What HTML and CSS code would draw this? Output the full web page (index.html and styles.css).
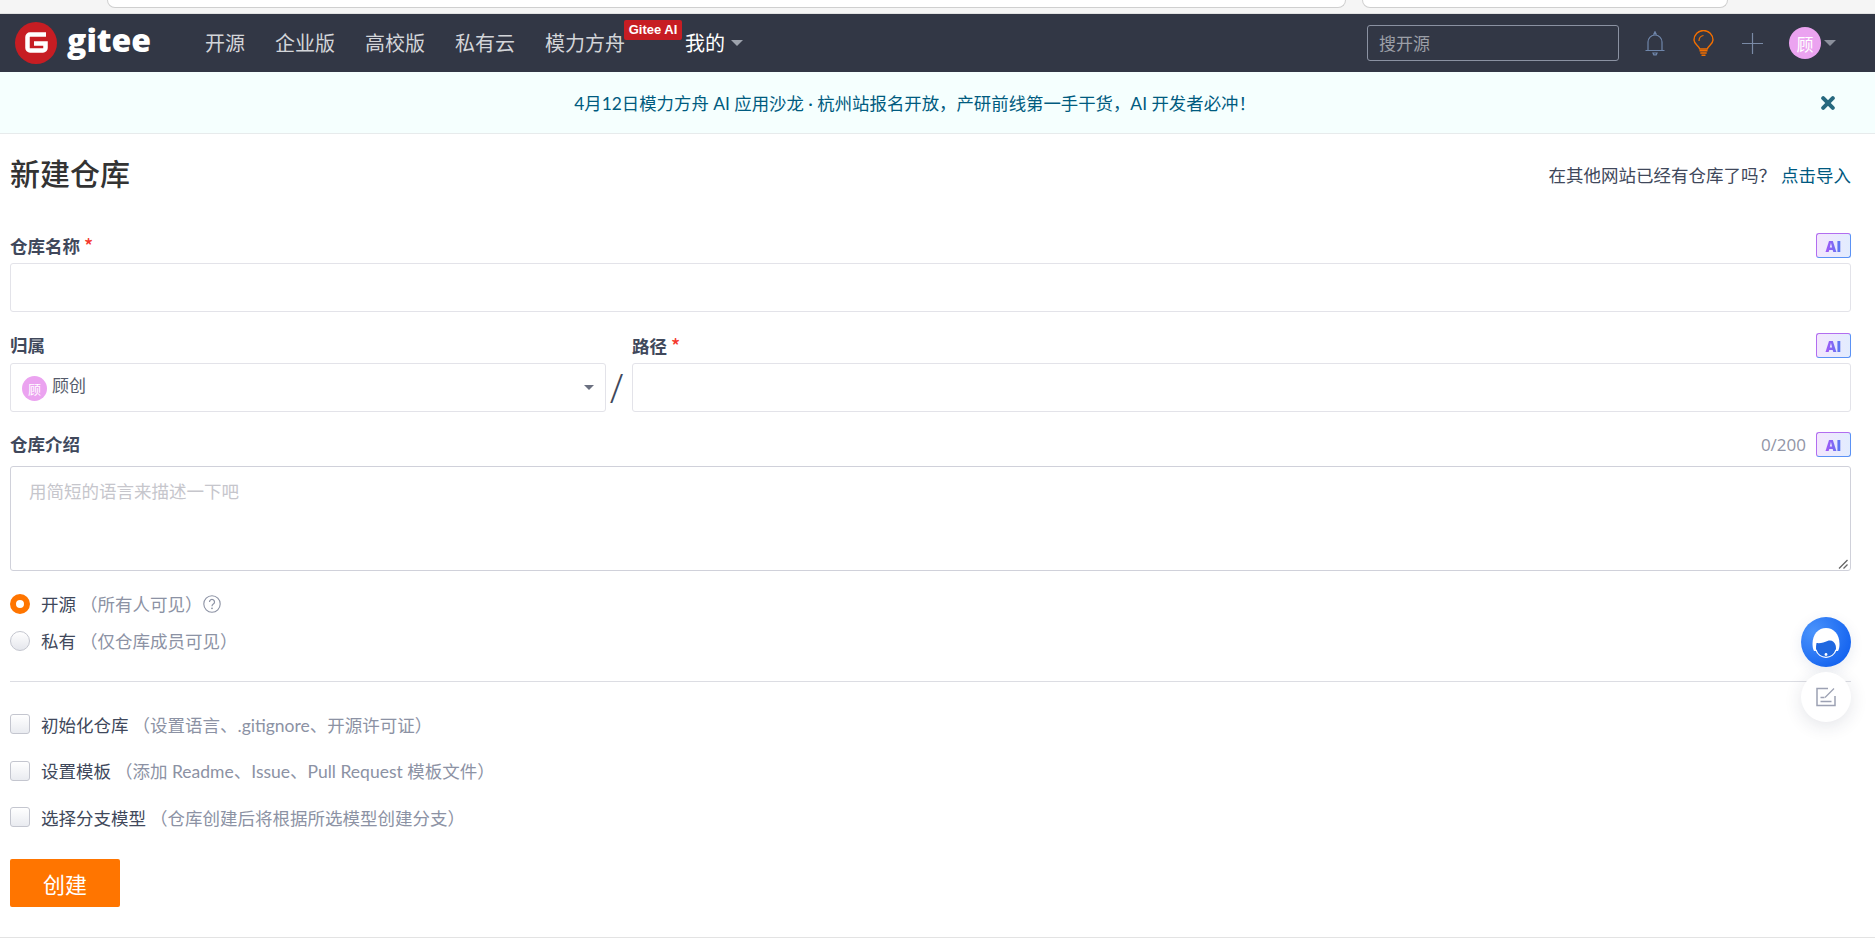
FILE: index.html
```html
<!DOCTYPE html>
<html lang="zh-CN">
<head>
<meta charset="utf-8">
<title>新建仓库 - Gitee</title>
<link rel="stylesheet" href="styles.css">
</head>
<body>
<div class="page">
  <div class="chrome">
    <div class="pill pill-a"></div>
    <div class="pill pill-b"></div>
  </div>

  <header class="nav">
    <a class="brand">
      <svg class="logo" viewBox="0 0 42 42" width="42" height="42">
        <circle cx="21" cy="21" r="21" fill="#c71d23"/>
        <path d="M31 12.500H15a2.500 2.500 0 0 0-2.500 2.500v11a2.500 2.500 0 0 0 2.500 2.500h13a2.500 2.500 0 0 0 2.500-2.500v-4.500H19" fill="none" stroke="#fff" stroke-width="4.500"/>
      </svg>
      <span class="brand-name">gitee</span>
    </a>
    <nav class="menu">
      <a class="menu-item">开源</a>
      <a class="menu-item">企业版</a>
      <a class="menu-item">高校版</a>
      <a class="menu-item">私有云</a>
      <a class="menu-item menu-ai">模力方舟<span class="ai-tag">Gitee AI</span></a>
      <a class="menu-item menu-mine">我的<i class="caret caret-nav"></i></a>
    </nav>
    <div class="nav-right">
      <div class="search">搜开源</div>
      <svg class="ico-bell" viewBox="0 0 20 25" width="20" height="25">
        <path d="M3 19V11a7 7 0 0 1 14 0v8M0.500 19.500h19M8.500 3.800 10 0.800l1.500 3M8 22h4l-.8 1.800H8.800z" fill="none" stroke="#6f86ab" stroke-width="1.200"/>
      </svg>
      <svg class="ico-bulb" viewBox="0 0 21 26" width="21" height="26">
        <path d="M6.800 19C5.800 15.500 1 14 1 10a9.500 9.500 0 0 1 19 0c0 4-4.800 5.500-5.800 9z" fill="none" stroke="#f26f00" stroke-width="1.400"/>
        <path d="M6 11A5.500 5.500 0 0 1 10.500 5.500" fill="none" stroke="#f26f00" stroke-width="1.200"/>
        <path d="M6.500 20.800h8M7.300 23h6.400M8.500 25.200h4" stroke="#f26f00" stroke-width="1.400"/>
      </svg>
      <svg class="ico-plus" viewBox="0 0 21 21" width="21" height="21">
        <path d="M10.500 0v21M0 10.500h21" stroke="#7a8aa6" stroke-width="1.200"/>
      </svg>
      <span class="avatar avatar-nav">顾</span>
      <i class="caret caret-user"></i>
    </div>
  </header>

  <div class="banner">
    <span class="banner-text">4月12日模力方舟 AI 应用沙龙 · 杭州站报名开放，产研前线第一手干货，AI 开发者必冲！</span>
    <svg class="banner-close" viewBox="0 0 14 14" width="14" height="14">
      <path d="M2.200 2.200l9.600 9.600M11.800 2.200l-9.600 9.600" stroke="#27697f" stroke-width="4" stroke-linecap="round"/>
    </svg>
  </div>

  <main class="main">
    <div class="title-row">
      <h1 class="title">新建仓库</h1>
      <div class="import">在其他网站已经有仓库了吗？<a class="link">点击导入</a></div>
    </div>

    <section class="field field-name">
      <div class="label-row">
        <label class="label">仓库名称 <b class="req">*</b></label>
        <span class="ai-btn"><em class="ai-text">AI</em></span>
      </div>
      <div class="input"></div>
    </section>

    <section class="field-split">
      <div class="col-owner">
        <div class="label-row"><label class="label">归属</label></div>
        <div class="input select">
          <span class="avatar avatar-small">顾</span>
          <span class="select-text">顾创</span>
          <i class="caret caret-select"></i>
        </div>
      </div>
      <span class="slash">/</span>
      <div class="col-path">
        <div class="label-row">
          <label class="label">路径 <b class="req">*</b></label>
          <span class="ai-btn"><em class="ai-text">AI</em></span>
        </div>
        <div class="input"></div>
      </div>
    </section>

    <section class="field field-desc">
      <div class="label-row">
        <label class="label">仓库介绍</label>
        <span class="counter">0/200</span>
        <span class="ai-btn"><em class="ai-text">AI</em></span>
      </div>
      <div class="textarea">
        用简短的语言来描述一下吧
        <svg class="resize" viewBox="0 0 10 10" width="10" height="10">
          <path d="M1 9.500 9.500 1M5.500 9.500 9.500 5.500" stroke="#666" stroke-width="1.300"/>
        </svg>
      </div>
    </section>

    <section class="radios">
      <div class="opt">
        <i class="radio radio-on"></i><span class="opt-text">开源</span><span class="hint hint-radio">（所有人可见）</span>
        <svg class="help" viewBox="0 0 18 18" width="18" height="18">
          <circle cx="9" cy="9" r="8.200" fill="none" stroke="#8c92a4" stroke-width="1.100"/>
          <path d="M6.500 7a2.500 2.500 0 1 1 3.800 2.100C9.300 9.700 9 10.200 9 11.200" fill="none" stroke="#8c92a4" stroke-width="1.200"/>
          <circle cx="9" cy="13.300" r=".9" fill="#8c92a4"/>
        </svg>
      </div>
      <div class="opt">
        <i class="radio"></i><span class="opt-text">私有</span><span class="hint hint-radio">（仅仓库成员可见）</span>
      </div>
    </section>

    <hr class="divider">

    <section class="checks">
      <div class="opt"><i class="check"></i><span class="opt-text">初始化仓库</span><span class="hint">（设置语言、.gitignore、开源许可证）</span></div>
      <div class="opt"><i class="check"></i><span class="opt-text">设置模板</span><span class="hint">（添加 Readme、Issue、Pull Request 模板文件）</span></div>
      <div class="opt"><i class="check"></i><span class="opt-text">选择分支模型</span><span class="hint">（仓库创建后将根据所选模型创建分支）</span></div>
    </section>

    <button class="submit">创建</button>
  </main>

  <div class="float-btn float-chat">
    <svg viewBox="0 0 50 50" width="50" height="50">
      <path d="M11.500 27c0-10 6-16 13.500-16s13.500 6 13.500 16c0 3-.5 5-1.500 7H13c-1-2-1.500-4-1.500-7z" fill="#fff"/>
      <path d="M15.500 26c4 .5 8-.5 11-2 3.500-1.500 7 .5 8 4 .5 1.500.5 3 .5 4a10.200 10.200 0 0 1-20 0c0-2 0-4 .5-6z" fill="#2068e0"/>
      <path d="M15 33a10.500 10.500 0 0 0 20 0" fill="none" stroke="#fff" stroke-width="1.200"/>
      <circle cx="25" cy="37.500" r="1.400" fill="#fff"/>
    </svg>
  </div>
  <div class="float-btn float-edit">
    <svg viewBox="0 0 20 20" width="20" height="20">
      <path d="M12 1.500H1V18.500H19V9" fill="none" stroke="#9ca1b3" stroke-width="1.500"/>
      <path d="M9 10.500 18 1.500" stroke="#9ca1b3" stroke-width="1.300"/>
      <path d="M4.500 10.500h4M4.500 14.500h11" stroke="#9ca1b3" stroke-width="1.300"/>
    </svg>
  </div>
</div>
</body>
</html>
```
FILE: styles.css
```css
* { box-sizing: border-box; }
html, body { margin: 0; padding: 0; height: 100%; }
body {
  background: #fff;
  font-family: "Open Sans", "Noto Sans CJK SC", sans-serif;
  font-size: 17px;
  color: #40485b;
  overflow: hidden;
}
.page {
  position: relative;
  width: 1875px;
  height: 938px;
  overflow: hidden;
  border-bottom: 1px solid #e3e3e3;
}
.chrome {
  display: flex;
  height: 14px;
  padding-left: 107px;
  gap: 16px;
  background: #f5f5f5;
  border-bottom: 1px solid #e2e2e2;
}
.pill {
  height: 8px;
  background: #fff;
  border: 1px solid #cfcfcf;
  border-top: 0;
  border-radius: 0 0 14px 14px;
}
.pill-a { width: 1239px; }
.pill-b { width: 366px; }

.nav {
  display: flex;
  align-items: center;
  height: 58px;
  padding-left: 15px;
  background: #323745;
}
.brand { display: flex; align-items: center; gap: 10px; width: 190px; }
.logo { flex: none; }
.brand-name {
  font-family: "Open Sans", sans-serif;
  font-size: 32px;
  font-weight: 800;
  line-height: 1;
  color: #fff;
  position: relative;
  top: -3px;
}
.menu { display: flex; align-items: center; gap: 30px; }
.menu-item {
  position: relative;
  font-family: "Noto Sans CJK SC", sans-serif;
  font-size: 20px;
  line-height: 28px;
  color: #d3d5d9;
}
.menu-ai { margin-right: 30px; }
.menu-mine { color: #fff; display: flex; align-items: center; }
.ai-tag {
  position: absolute;
  left: 79px;
  top: -9px;
  width: 58px;
  height: 20px;
  border-radius: 2px;
  background: #c71d23;
  color: #fff;
  font-family: "Liberation Sans", sans-serif;
  font-size: 13px;
  font-weight: 700;
  line-height: 20px;
  text-align: center;
  white-space: nowrap;
}
.caret {
  display: inline-block;
  width: 0;
  height: 0;
  border-style: solid;
  border-color: #9ea3ad transparent transparent;
  border-width: 6px 6px 0;
}
.caret-nav { margin-left: 6px; }
.nav-right {
  display: flex;
  align-items: center;
  margin-left: auto;
  padding-right: 39px;
}
.search {
  width: 252px;
  height: 36px;
  margin-right: 26px;
  padding-left: 11px;
  border: 1px solid #8b92a2;
  border-radius: 3px;
  font-family: "Noto Sans CJK SC", sans-serif;
  font-size: 17px;
  line-height: 34px;
  color: #9c9fa7;
}
.ico-bell { margin-right: 28px; }
.ico-bulb { margin-right: 28px; }
.ico-plus { margin-right: 26px; }
.avatar {
  display: inline-flex;
  align-items: center;
  justify-content: center;
  border-radius: 50%;
  background: #eba3f0;
  color: #fff;
  font-family: "Noto Sans CJK SC", sans-serif;
  flex: none;
}
.avatar-nav { width: 32px; height: 32px; font-size: 17px; }
.caret-user { margin-left: 3px; margin-top: -1px; border-color: #8b909c transparent transparent; }

.banner {
  display: flex;
  align-items: center;
  justify-content: center;
  position: relative;
  height: 62px;
  background: #f5fffe;
  border-bottom: 1px solid #e7ebec;
  padding-right: 45px;
}
.banner-text {
  font-family: "Lato", "Noto Sans CJK SC", sans-serif;
  font-size: 17.400px;
  color: #005b7f;
  white-space: nowrap;
}
.banner-close { position: absolute; left: 1821px; top: 24px; }

.main { padding: 0 24px 0 10px; }
.title-row {
  display: flex;
  align-items: center;
  justify-content: space-between;
  height: 80px;
  margin-bottom: 19px;
}
.title {
  margin: 0 0 4px;
  font-family: "Noto Sans CJK SC", sans-serif;
  font-size: 30px;
  font-weight: 500;
  line-height: 40px;
  color: #333;
}
.import { font-family: "Noto Sans CJK SC", sans-serif; font-size: 17.500px; color: #40485b; white-space: nowrap; }
.link { color: #005980; margin-left: 5px; }

.label-row {
  display: flex;
  align-items: center;
  height: 25px;
  margin-bottom: 5px;
}
.label {
  font-family: "Noto Sans CJK SC", sans-serif;
  font-size: 17.500px;
  font-weight: 700;
  color: #40485b;
  margin-right: auto;
  padding-bottom: 2px;
}
.req { color: #f5392d; font-weight: 500; font-size: 19px; }
.ai-btn {
  width: 35px;
  height: 25px;
  flex: none;
  border-radius: 3px;
  border: 1px solid #a78bfa;
  border-color: #b26df0 #5b92f5 #5b92f5 #b26df0;
  background: linear-gradient(90deg, #f3e6fd, #e2ecfe);
  text-align: center;
  line-height: 23px;
}
.ai-text {
  font-family: "Open Sans", sans-serif;
  font-size: 15px;
  font-style: normal;
  font-weight: 800;
  background: linear-gradient(90deg, #a855f7, #4f7cf0);
  -webkit-background-clip: text;
  background-clip: text;
  color: transparent;
}
.input {
  height: 49px;
  border: 1px solid #e3e3e9;
  border-radius: 3px;
  background: #fff;
}
.field-name { margin-bottom: 21px; }
.field-split { display: flex; margin-bottom: 20px; }
.col-owner { width: 596px; flex: none; }
.col-path { flex: 1; }
.slash {
  width: 26px;
  flex: none;
  align-self: flex-end;
  font-family: "Open Sans", sans-serif;
  font-size: 40px;
  font-weight: 300;
  line-height: 49px;
  text-align: center;
  color: #40485b;
  padding-right: 5px;
}
.select {
  display: flex;
  align-items: center;
  position: relative;
  padding-left: 11px;
}
.avatar-small { width: 25px; height: 25px; font-size: 13px; margin-top: 1px; }
.select-text {
  margin-left: 5px;
  margin-top: -6px;
  font-family: "Noto Sans CJK SC", sans-serif;
  color: #555b6b;
}
.caret-select {
  margin-left: auto;
  margin-right: 11px;
  border-color: #6b7080 transparent transparent;
  border-width: 5px 5px 0;
}
.field-desc .label-row { margin-bottom: 9px; }
.counter { font-size: 17px; color: #9195a6; margin-right: 10px; }
.textarea {
  position: relative;
  height: 105px;
  padding: 12px 18px;
  border: 1px solid #d0d1da;
  border-radius: 3px;
  font-family: "Noto Sans CJK SC", sans-serif;
  font-size: 17.500px;
  color: #c6c6cc;
  line-height: 24px;
}
.resize { position: absolute; right: 2px; bottom: 1px; }

.radios { padding-top: 14px; }
.opt {
  display: flex;
  align-items: center;
  height: 37px;
  white-space: nowrap;
}
.opt-text { margin-left: 11px; font-family: "Noto Sans CJK SC", sans-serif; color: #40485b; font-size: 17.500px; }
.hint { color: #8c92a4; font-size: 17.500px; font-family: "Lato", "Noto Sans CJK SC", sans-serif; margin-left: 4px; }
.hint-radio { margin-left: 4px; }
.help { margin-left: 0; }
.radio {
  width: 20px;
  height: 20px;
  flex: none;
  border-radius: 50%;
  border: 1px solid #c4c6cf;
  background: linear-gradient(#fff, #e4e6ec);
}
.radio-on { border: 6px solid #ff7500; background: #fff; }
.divider {
  margin: 22px 0 19px;
  border: 0;
  border-top: 1px solid #dcdde3;
}
.checks .opt { height: 46.500px; }
.check {
  width: 20px;
  height: 20px;
  flex: none;
  border-radius: 3px;
  border: 1px solid #c4c6cf;
  background: linear-gradient(#fff, #e9ebf0);
}
.submit {
  display: block;
  width: 110px;
  height: 48px;
  margin-top: 18px;
  border: 0;
  border-radius: 2px;
  background: #ff7500;
  color: #fff;
  font-family: "Noto Sans CJK SC", sans-serif;
  font-size: 22px;
  padding: 0;
}
.float-btn {
  position: absolute;
  left: 1801px;
  width: 50px;
  height: 50px;
  border-radius: 50%;
  display: flex;
  align-items: center;
  justify-content: center;
}
.float-chat {
  top: 617px;
  background: radial-gradient(circle at 25% 30%, #4a93fb, #1463f0 80%);
  box-shadow: 0 4px 14px rgba(30, 60, 120, .1);
}
.float-edit {
  top: 672px;
  background: #fff;
  box-shadow: 0 4px 18px rgba(30, 40, 70, .12);
}
```
